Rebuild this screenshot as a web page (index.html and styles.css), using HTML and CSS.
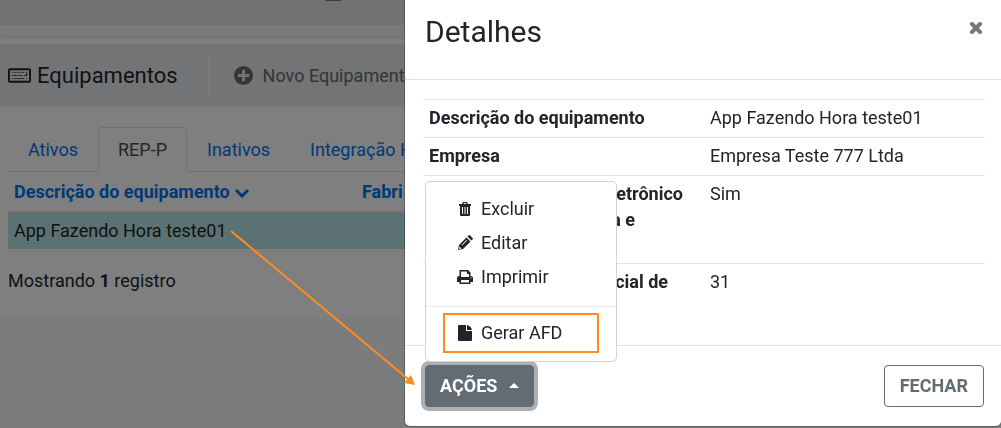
FILE: index.html
```html
<!DOCTYPE html>
<html lang="pt-BR">
<head>
<meta charset="utf-8">
<meta name="viewport" content="width=device-width, initial-scale=1">
<title>Equipamentos</title>
<link rel="stylesheet" href="styles.css">
</head>
<body>
<div class="page">
  <div class="topbar">
    <svg class="topbar-mark" viewBox="0 0 16 2" aria-hidden="true"><rect width="16" height="1" rx="1"/></svg>
  </div>
  <div class="spacer"></div>
  <main class="panel">
    <header class="panel-header">
      <h1 class="panel-title">
        <svg class="icon-keyboard" viewBox="0 0 24 15" aria-hidden="true">
          <rect x="1" y="1" width="22" height="13" rx="1" fill="none" stroke="currentColor" stroke-width="2"/>
          <path fill="currentColor" d="M4 4h1v1H4zM6 4h2v1H6zM9 4h2v1H9zM12 4h2v1h-2zM15 4h2v1h-2zM19 4h1v4h-3V7h2zM4 7h2v1H4zM7 7h2v1H7zM10 7h2v1h-2zM13 7h2v1h-2zM4 10h1v1H4zM6 10h11v1H6zM19 10h1v1h-1z"/>
        </svg>
        Equipamentos
      </h1>
      <button class="new-button" type="button">
        <svg class="icon-plus" viewBox="0 0 20 20" aria-hidden="true"><circle cx="10" cy="10" r="10" fill="currentColor"/><path class="plus-cross" d="M10 4v12M4 10h12"/></svg>
        Novo Equipamento
      </button>
    </header>
    <div class="panel-body">
      <nav class="tabs">
        <a class="tab" href="#ativos">Ativos</a>
        <a class="tab tab-active" href="#rep-p">REP-P</a>
        <a class="tab" href="#inativos">Inativos</a>
        <a class="tab" href="#integracao">Integração H</a>
      </nav>
      <table class="list">
        <thead>
          <tr>
            <th><a href="#ordenar">Descrição do equipamento
              <svg class="icon-chevron" viewBox="0 0 16 10" aria-hidden="true"><path d="M2 2l6 6 6-6"/></svg></a></th>
            <th><a href="#fabricante">Fabri</a></th>
          </tr>
        </thead>
        <tbody><tr><td>App Fazendo Hora teste01</td><td></td></tr></tbody>
      </table>
      <p class="summary">Mostrando <b>1</b> registro</p>
    </div>
  </main>
</div>

<div class="overlay">
  <section class="modal" role="dialog" aria-labelledby="modal-title">
    <header class="modal-header">
      <h2 class="modal-title" id="modal-title">Detalhes</h2>
      <button class="close" type="button" aria-label="Fechar detalhes">
        <svg class="icon-close" viewBox="0 0 14 12" aria-hidden="true"><path d="M3 2l8 8M11 2l-8 8"/></svg>
      </button>
    </header>
    <div class="modal-body">
      <table class="details">
        <tbody>
          <tr><th scope="row">Descrição do equipamento</th><td>App Fazendo Hora teste01</td></tr>
          <tr><th scope="row">Empresa</th><td>Empresa Teste 777 Ltda</td></tr>
          <tr class="row-tall"><th scope="row"><span class="line line-long">etrônico</span><span class="line line-short">a e</span></th><td>Sim</td></tr>
          <tr class="row-medium"><th scope="row"><span class="line line-medium">cial de</span></th><td>31</td></tr>
        </tbody>
      </table>
    </div>
    <footer class="modal-footer">
      <div class="dropdown">
        <button class="button button-solid" type="button" aria-haspopup="true" aria-expanded="true">AÇÕES <span class="caret"></span></button>
        <div class="menu" role="menu">
          <button class="menu-item" type="button" role="menuitem">
            <svg class="menu-icon" viewBox="0 0 16 16" aria-hidden="true"><path fill="currentColor" fill-rule="evenodd" d="M2 3h3l1-2h4l1 2h3v2h-1v9q0 1-1 1H4q-1 0-1-1V5H2zM6.500 3h3L9 2H7zM5 6v7h1V6zM7.500 6v7h1V6zM10 6v7h1V6z"/></svg>
            Excluir</button>
          <button class="menu-item" type="button" role="menuitem">
            <svg class="menu-icon" viewBox="0 0 16 16" aria-hidden="true"><path fill="currentColor" fill-rule="evenodd" d="M1 15l1-5 7.500-7.500 4 4L6 14zM10.500 1.500l1-1q.8-.8 1.600 0L15.500 3q.8.700 0 1.500l-1 1zM2.500 11.500l-.5 2.500 2.500-.5zM4.500 10l5-5 .6.500-5 5z"/></svg>
            Editar</button>
          <button class="menu-item" type="button" role="menuitem">
            <svg class="menu-icon" viewBox="0 0 16 16" aria-hidden="true"><path fill="currentColor" fill-rule="evenodd" d="M3 1h8l2.500 2.500V7q2.500 0 2.500 2v4h-2.500v2h-11v-2H0V9q0-2 2.500-2V1zM4 2.500V8h8V5h-2V2.500zM4 11v2.500h8V11zM13.500 8.500v1h1v-1z"/></svg>
            Imprimir</button>
          <div class="menu-divider"></div>
          <button class="menu-item menu-item-marked" type="button" role="menuitem">
            <svg class="menu-icon" viewBox="0 0 16 16" aria-hidden="true"><path fill="currentColor" d="M2 0h7v6h6v9q0 1-1 1H2q-1 0-1-1V1q0-1 1-1zM10 0q4 1 5 5h-5z"/></svg>
            Gerar AFD</button>
        </div>
      </div>
      <button class="button button-outline" type="button">FECHAR</button>
    </footer>
  </section>
</div>

<svg class="arrow" viewBox="0 0 186 156" aria-hidden="true">
  <path d="M1 1L178 149" fill="none" stroke="#ff8c1f" stroke-width="2"/>
  <path d="M185 155l-4-10-7 8z" fill="#ff8c1f"/>
</svg>
</body>
</html>
```
FILE: styles.css
```css
* { box-sizing: border-box; }

body {
  margin: 0;
  background: #f7f9f8;
  color: #212529;
  font: 18px/26px Roboto, sans-serif;
  overflow: hidden;
}

h1, h2, p { margin: 0; font-weight: 400; }
button { font: inherit; color: inherit; background: none; border: 0; padding: 0; }
a { color: #0073ee; text-decoration: none; }
table { border-collapse: collapse; width: 100%; }
svg { flex: none; }

.topbar { height: 25px; background: #e2e2e2; padding-left: 325px; }
.topbar-mark { display: block; width: 16px; height: 2px; fill: #777; }
.spacer { height: 14px; background: #f1f4f2; }

.panel { background: #fff; padding-top: 5px; box-shadow: 0 4px 16px rgba(0, 0, 0, .08); }
.panel-header { display: flex; align-items: center; height: 63px; padding: 0 8px; background: #e5e8eb; }
.panel-title { display: flex; align-items: center; gap: 6px; font-size: 22px; padding-right: 30px; }
.icon-keyboard { width: 23px; height: 15px; }
.new-button {
  display: flex; align-items: center; gap: 10px;
  height: 36px; padding-left: 24px;
  border-left: 2px solid #f7f9fb; color: #666a6d;
}
.icon-plus { width: 19px; height: 19px; }
.plus-cross { fill: none; stroke: #e5e8eb; stroke-width: 3; }

.panel-body { padding: 20px 8px 24px; }
.tabs { display: flex; border-bottom: 1px solid #dee2e6; }
.tab { padding: 9px 19px 8px; border: 1px solid transparent; white-space: nowrap; margin-bottom: -1px; }
.tab-active { color: #495057; border-color: #dee2e6 #dee2e6 #fff; border-radius: 4px 4px 0 0; background: #fff; }
.list th { text-align: left; font-weight: 700; padding: 7px 6px 6px; border-bottom: 2px solid #dee2e6; }
.list th:first-child { width: 348px; }
.list td { padding: 5px 6px; background: #b7e2e4; }
.icon-chevron { width: 16px; height: 10px; fill: none; stroke: currentColor; stroke-width: 3; }
.summary { margin-top: 19px; }

.overlay {
  position: fixed; inset: 0;
  display: flex; justify-content: flex-end; align-items: flex-start;
  background: rgba(0, 0, 0, .5);
}
.modal {
  width: 100%; max-width: 596px;
  background: #fff; border-radius: 0 0 5px 5px;
  box-shadow: 0 0 0 1px rgba(0, 0, 0, .25);
}
.modal-header {
  display: flex; justify-content: space-between; align-items: flex-start;
  padding: 14px 18px 29px 20px; border-bottom: 1px solid #dee2e6;
}
.modal-title { font-size: 30px; line-height: 36px; }
.close { padding-top: 8px; line-height: 0; color: #777; }
.icon-close { width: 14px; height: 12px; fill: none; stroke: currentColor; stroke-width: 4; stroke-linecap: round; }
.modal-body { padding: 19px 16px 14px 18px; }
.details { table-layout: fixed; }
.details tr { border-top: 1px solid #dee2e6; }
.details th, .details td { padding: 5px 6px 6px; text-align: left; vertical-align: top; }
.details th { font-weight: 700; }
.row-tall { height: 88px; }
.row-medium { height: 67px; }
.line { display: block; text-align: right; }
.line-long { padding-right: 15px; }
.line-medium { padding-right: 30px; }
.line-short { padding-right: 63px; }
.modal-footer {
  display: flex; justify-content: space-between; align-items: center;
  padding: 19px 17px 19px 20px; border-top: 1px solid #dee2e6;
}

.dropdown { position: relative; }
.button { display: flex; align-items: center; gap: 12px; padding: 7px 15px; border: 1px solid #636b73; border-radius: 4px; font-weight: 700; }
.button-solid { padding: 7px 14px; background: #636b73; color: #fff; box-shadow: 0 0 0 4px #abb0b5; }
.button-outline { color: #636b73; }
.caret { border: 5px solid transparent; border-top: 0; border-bottom-color: currentColor; }

.menu {
  position: absolute; left: 0; bottom: calc(100% + 3px);
  width: 192px; padding: 10px 0 8px;
  background: #fff; border: 1px solid #d0d2d4; border-radius: 5px;
}
.menu-item { display: flex; align-items: center; gap: 8px; width: 100%; padding: 4px 31px; white-space: nowrap; }
.menu-icon { width: 16px; height: 16px; }
.menu-divider { height: 1px; margin: 12px 0 6px; background: #e9ecef; }
.menu-item-marked { width: 156px; margin: 0 17px; padding: 5px 12px; border: 2px solid #ff8c1f; }

.arrow { position: absolute; left: 230px; top: 230px; width: 186px; height: 156px; }
```
